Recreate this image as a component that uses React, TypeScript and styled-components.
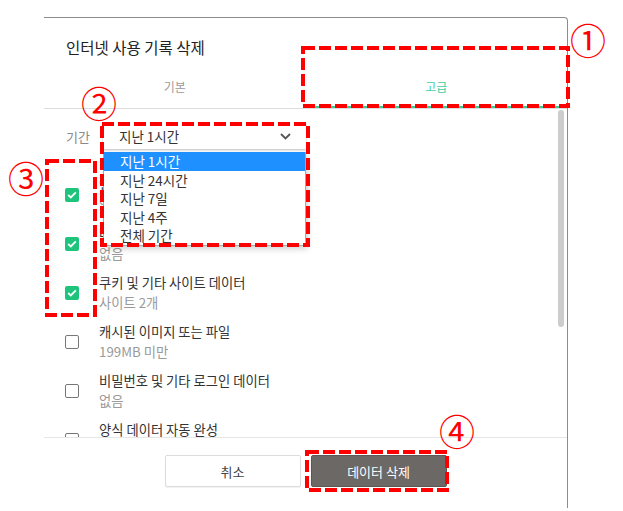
import styled, { createGlobalStyle } from "styled-components";

const GlobalStyle = createGlobalStyle`
  html, body {
    margin: 0;
    padding: 0;
    background: #fff;
  }
  body {
    font-family: "Noto Sans CJK KR", "Noto Sans", sans-serif;
    color: #333;
  }
`;

const periods = ["지난 1시간", "지난 24시간", "지난 7일", "지난 4주", "전체 기간"];

const items = [
  { label: "인터넷 사용 기록", sub: "없음", checked: true },
  { label: "다운로드 기록", sub: "없음", checked: true },
  { label: "쿠키 및 기타 사이트 데이터", sub: "사이트 2개", checked: true },
  { label: "캐시된 이미지 또는 파일", sub: "199MB 미만", checked: false },
  { label: "비밀번호 및 기타 로그인 데이터", sub: "없음", checked: false },
  { label: "양식 데이터 자동 완성", sub: "없음", checked: false },
];

// 주석용 빨간 점선 박스 (x, y, w, h) 와 번호 위치
const marks = [
  { n: "①", box: [301, 46, 269, 62], at: [588, 39] },
  { n: "②", box: [100, 122, 210, 125], at: [99, 102] },
  { n: "③", box: [45, 159, 52, 158], at: [26, 177] },
  { n: "④", box: [305, 450, 144, 42], at: [457, 430] },
];

function DashedBox({ box }: { box: number[] }) {
  const [x, y, w, h] = box;
  return (
    <MarkSvg
      width={w}
      height={h}
      viewBox={`0 0 ${w} ${h}`}
      style={{ left: x, top: y }}
    >
      <rect
        x="2"
        y="2"
        width={w - 4}
        height={h - 4}
        fill="none"
        stroke="#ff0000"
        strokeWidth="4"
        strokeDasharray="12 4"
      />
    </MarkSvg>
  );
}

export default function App() {
  return (
    <Page>
      <GlobalStyle />
      <Dialog>
        <Title>인터넷 사용 기록 삭제</Title>
        <Tabs>
          <Tab>기본</Tab>
          <Tab $active>고급</Tab>
        </Tabs>
        <Body>
          <PeriodRow>
            <PeriodLabel>기간</PeriodLabel>
            <SelectWrap>
              <Select>
                <span>지난 1시간</span>
                <svg width="11" height="7" viewBox="0 0 11 7">
                  <path
                    d="M1 1l4.5 4.5L10 1"
                    fill="none"
                    stroke="#555"
                    strokeWidth="1.8"
                  />
                </svg>
              </Select>
              <Options>
                {periods.map((p, i) => (
                  <Option key={p} $selected={i === 0}>
                    {p}
                  </Option>
                ))}
              </Options>
            </SelectWrap>
          </PeriodRow>
          <List>
            {items.map((it) => (
              <Row key={it.label}>
                <Check $checked={it.checked}>
                  {it.checked && (
                    <svg width="10" height="8" viewBox="0 0 10 8">
                      <path
                        d="M1.2 4l2.6 2.5L8.8 1.4"
                        fill="none"
                        stroke="#fff"
                        strokeWidth="1.8"
                      />
                    </svg>
                  )}
                </Check>
                <RowText>
                  <Label>{it.label}</Label>
                  <Sub>{it.sub}</Sub>
                </RowText>
              </Row>
            ))}
          </List>
          <Thumb />
        </Body>
        <Footer>
          <Button>취소</Button>
          <Button $primary>데이터 삭제</Button>
        </Footer>
      </Dialog>
      {marks.map((m) => (
        <span key={m.n}>
          <DashedBox box={m.box} />
          <Num style={{ left: m.at[0], top: m.at[1] }}>{m.n}</Num>
        </span>
      ))}
    </Page>
  );
}

const Page = styled.div`
  position: relative;
  width: 623px;
  height: 511px;
  overflow: hidden;
  padding: 17px 0 0 44px;
  box-sizing: border-box;
`;

const Dialog = styled.div`
  width: 524px;
  height: 491px;
  box-sizing: border-box;
  border-top: 1px solid #8c8c8c;
  border-right: 1px solid #8c8c8c;
  border-top-right-radius: 4px;
  display: flex;
  flex-direction: column;
  background: #fff;
`;

const Title = styled.div`
  height: 47px;
  padding: 19px 0 0 22px;
  box-sizing: border-box;
  font-size: 15.5px;
  line-height: 20px;
  color: #222;
`;

const Tabs = styled.div`
  display: grid;
  grid-template-columns: 1fr 1fr;
  height: 44px;
  border-bottom: 1px solid #dcdcdc;
  box-sizing: border-box;
`;

const Tab = styled.div<{ $active?: boolean }>`
  display: flex;
  align-items: center;
  justify-content: center;
  font-size: 12px;
  color: ${(p) => (p.$active ? "#45cf9e" : "#9a9a9a")};
  box-shadow: ${(p) => (p.$active ? "inset 0 -2px 0 #3dcc99" : "none")};
`;

const Body = styled.div`
  position: relative;
  height: 328px;
  overflow: hidden;
`;

const Thumb = styled.div`
  position: absolute;
  top: 1px;
  right: 3px;
  width: 6px;
  height: 217px;
  border-radius: 3px;
  background: #cdcdcd;
`;

const PeriodRow = styled.div`
  display: flex;
  align-items: center;
  margin-top: 14px;
  padding-left: 22px;
  height: 26px;
`;

const PeriodLabel = styled.div`
  width: 37px;
  font-size: 13px;
  color: #8a8a8a;
`;

const SelectWrap = styled.div`
  position: relative;
  width: 203px;
`;

const Select = styled.div`
  display: flex;
  align-items: center;
  justify-content: space-between;
  height: 26px;
  padding: 0 15px 0 16px;
  box-sizing: border-box;
  background: #fff;
  box-shadow: 0 1px 2px rgba(0, 0, 0, 0.25);
  font-size: 13.5px;
  color: #333;
`;

const Options = styled.div`
  position: absolute;
  top: 29px;
  left: 0;
  width: 203px;
  background: #fff;
  border: 1px solid #a8a8a8;
  border-top: none;
  box-sizing: border-box;
  box-shadow: 2px 3px 6px rgba(0, 0, 0, 0.18);
  z-index: 2;
`;

const Option = styled.div<{ $selected?: boolean }>`
  height: 18.6px;
  line-height: 18.6px;
  padding-left: 16px;
  font-size: 13.5px;
  color: ${(p) => (p.$selected ? "#fff" : "#333")};
  background: ${(p) => (p.$selected ? "#1e90ff" : "transparent")};
`;

const List = styled.div`
  display: flex;
  flex-direction: column;
  gap: 9px;
  margin-top: 26px;
  padding-left: 21px;
`;

const Row = styled.div`
  display: flex;
  align-items: center;
  gap: 20px;
  height: 40px;
`;

const Check = styled.div<{ $checked?: boolean }>`
  width: 14px;
  height: 14px;
  box-sizing: border-box;
  border-radius: 2px;
  display: flex;
  align-items: center;
  justify-content: center;
  background: ${(p) => (p.$checked ? "#1ec47b" : "#fff")};
  border: ${(p) => (p.$checked ? "none" : "1.5px solid #777")};
`;

const RowText = styled.div`
  display: flex;
  flex-direction: column;
`;

const Label = styled.div`
  font-size: 13.3px;
  line-height: 20px;
  color: #333;
`;

const Sub = styled.div`
  font-size: 13.3px;
  line-height: 20px;
  color: #9a9a9a;
`;

const Footer = styled.div`
  display: flex;
  justify-content: center;
  gap: 10px;
  padding-top: 17px;
  border-top: 1px solid #e6e6e6;
  flex: 1;
`;

const Button = styled.button<{ $primary?: boolean }>`
  width: 136px;
  height: 32px;
  font-family: inherit;
  font-size: 13px;
  border-radius: 2px;
  cursor: pointer;
  color: ${(p) => (p.$primary ? "#fff" : "#444")};
  background: ${(p) => (p.$primary ? "#6b6866" : "#fff")};
  border: 1px solid ${(p) => (p.$primary ? "#5b5856" : "#dcdcdc")};
  box-shadow: ${(p) => (p.$primary ? "none" : "0 1px 1px rgba(0,0,0,0.06)")};
`;

const MarkSvg = styled.svg`
  position: absolute;
  z-index: 3;
`;

const Num = styled.div`
  position: absolute;
  transform: translate(-50%, -50%);
  font-family: "Noto Sans CJK KR", sans-serif;
  font-size: 36px;
  line-height: 1;
  color: #ff0000;
  z-index: 3;
`;
